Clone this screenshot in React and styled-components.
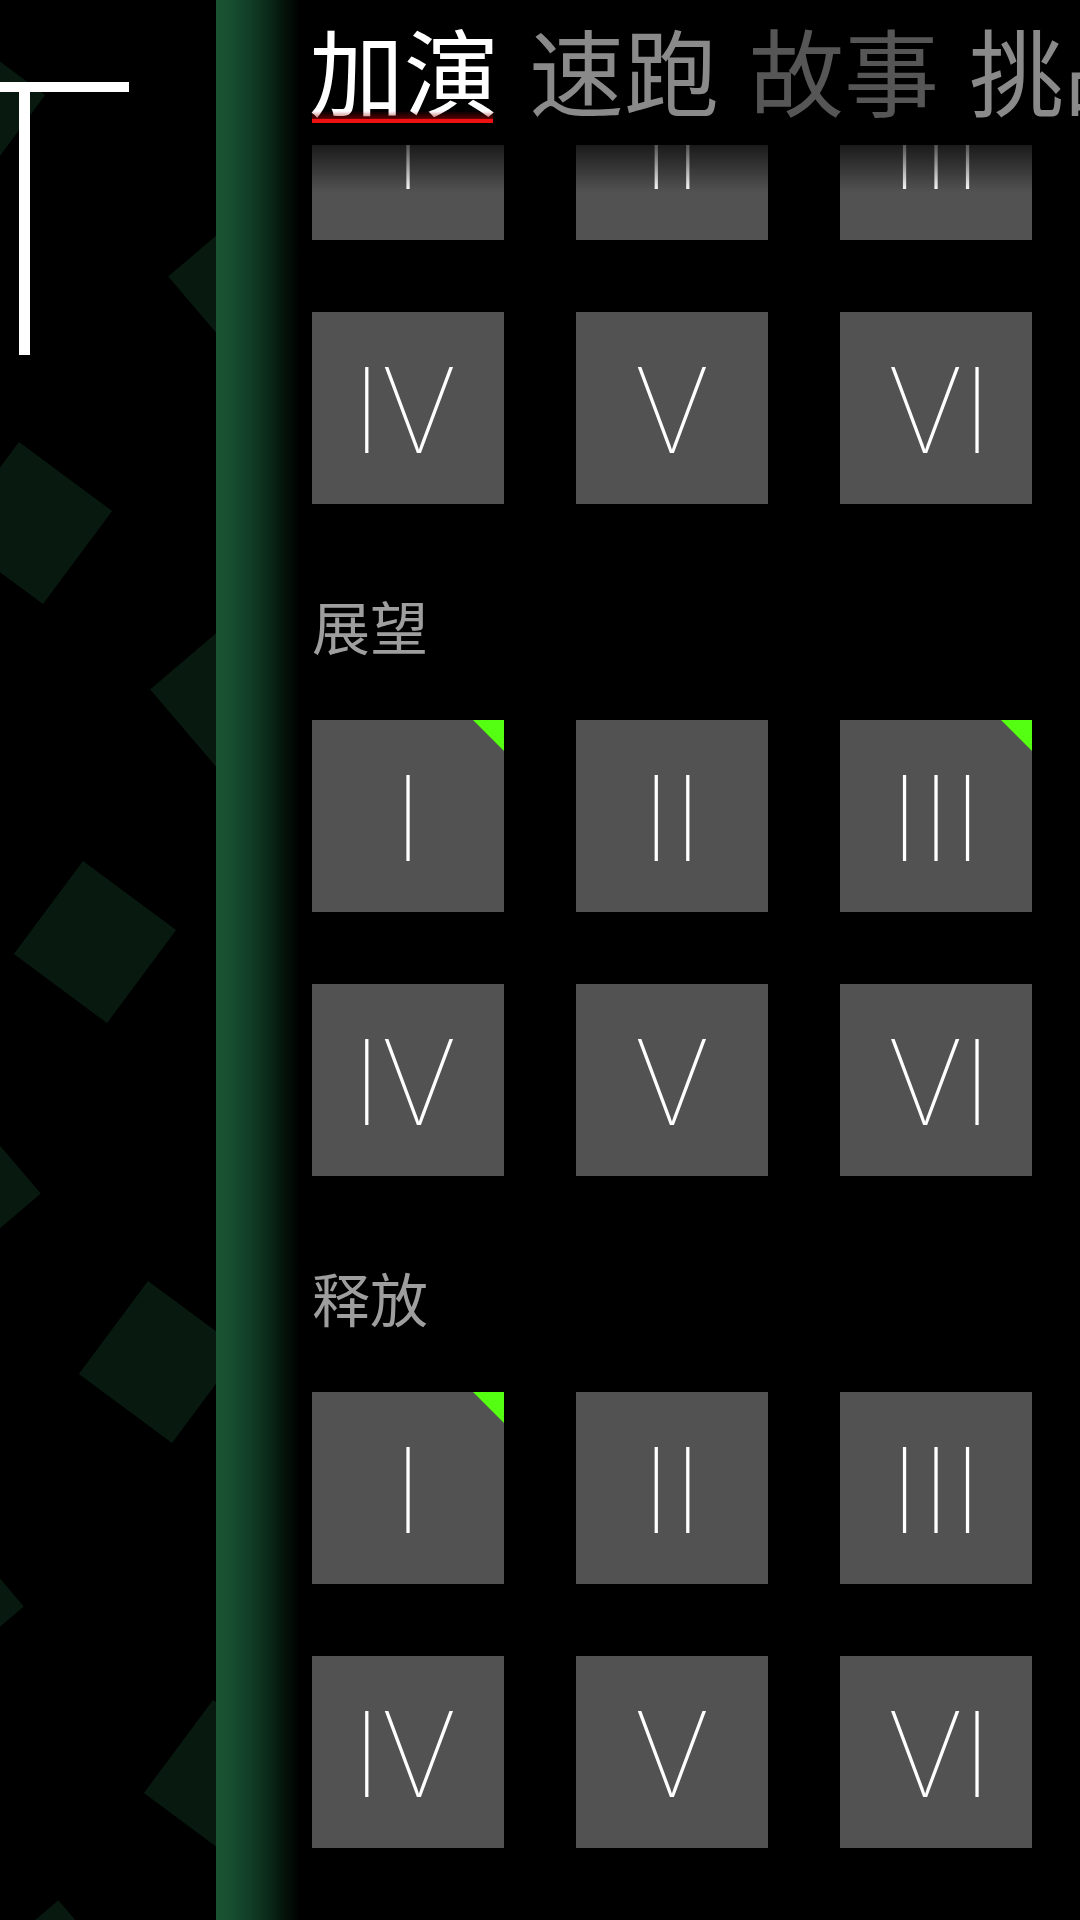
import React from "react";
import styled, { createGlobalStyle, css } from "styled-components";

const GlobalStyle = createGlobalStyle`
  html, body {
    margin: 0;
    padding: 0;
    background: #000;
  }
  body {
    width: 1080px;
    height: 1920px;
    overflow: hidden;
    font-family: "Noto Sans CJK SC", "Noto Sans", sans-serif;
  }
  * { box-sizing: border-box; }
`;

const Screen = styled.div`
  display: grid;
  grid-template-columns: 216px 1fr;
  width: 1080px;
  height: 1920px;
  overflow: hidden;
  background: #000;
`;

const SidePanel = styled.aside`
  position: relative;
  overflow: hidden;
  background: #000;
`;

const Pattern = styled.svg`
  position: absolute;
  inset: 0;
  display: block;
`;

const Bracket = styled.div`
  position: relative;
  z-index: 1;
  width: 129px;
  margin-top: 82px;
  border-top: 10px solid #fff;
`;

const Stem = styled.div`
  width: 11px;
  height: 263px;
  margin-left: 19px;
  background: #fff;
`;

const MainPanel = styled.main`
  display: flex;
  min-width: 0;
  background: #000;
`;

const Shade = styled.div`
  flex: none;
  width: 84px;
  background: linear-gradient(
    90deg,
    #185332 0px,
    #175031 12px,
    #123f27 32px,
    #0b2a19 52px,
    #041109 70px,
    #000 84px
  );
`;

const Content = styled.section`
  position: relative;
  flex: 1;
  min-width: 0;
  overflow: hidden;
  padding-left: 12px;
`;

const Header = styled.header`
  position: absolute;
  z-index: 2;
  top: 0;
  left: 0;
  right: 0;
  height: 192px;
  padding: 21px 0 0 9px;
  background: linear-gradient(
    180deg,
    #000 0px,
    #000 145px,
    rgba(0, 0, 0, 0.68) 145px,
    rgba(0, 0, 0, 0) 192px
  );
`;

const Tabs = styled.nav`
  display: flex;
  gap: 30px;
  white-space: nowrap;
`;

const Tab = styled.div`
  position: relative;
  flex: none;
  font-family: "Noto Sans CJK SC", "Noto Sans", sans-serif;
  font-size: 95px;
  line-height: 95px;
  color: ${(p) => p.$color};
  ${(p) =>
    p.$active &&
    css`
      &::after {
        content: "";
        position: absolute;
        left: 3px;
        right: 6px;
        bottom: -7px;
        height: 12px;
        background: linear-gradient(
          180deg,
          rgba(255, 0, 0, 0) 0%,
          rgba(150, 0, 0, 0.55) 62%,
          #ee1111 66%,
          #ee1111 100%
        );
      }
    `}
`;

const List = styled.div`
  display: flex;
  flex-direction: column;
  gap: 91px;
  margin-top: 48px;
`;

const Group = styled.div`
  display: flex;
  flex-direction: column;
`;

const GroupTitle = styled.h2`
  margin: 0 0 65px;
  font-family: "Noto Sans CJK SC", "Noto Sans", sans-serif;
  font-weight: 400;
  font-size: 58px;
  line-height: 60px;
  color: #9e9e9e;
`;

const Grid = styled.div`
  display: grid;
  grid-template-columns: repeat(3, 192px);
  gap: 72px;
`;

const Tile = styled.div`
  position: relative;
  display: flex;
  align-items: center;
  justify-content: center;
  width: 192px;
  height: 192px;
  padding-top: 9px;
  background: #525252;
  ${(p) =>
    p.$marked &&
    css`
      &::before {
        content: "";
        position: absolute;
        top: 0;
        right: 0;
        width: 31px;
        height: 31px;
        background: #55ff11;
        clip-path: polygon(0 0, 100% 0, 100% 100%);
      }
    `}
`;

const Numeral = styled.span`
  font-family: "Roboto", "Liberation Sans", sans-serif;
  font-weight: 100;
  font-size: 121px;
  line-height: 1;
  color: #fff;
  padding-left: ${(p) => p.$padL || 0}px;
  padding-right: ${(p) => p.$padR || 0}px;
`;

const DIAMONDS = [
  { cx: -36, cy: 107, a: -8.4 },
  { cx: 250, cy: 283, a: 4.45 },
  { cx: 31, cy: 523, a: -8.4 },
  { cx: 232, cy: 696, a: 4.45 },
  { cx: 95, cy: 942, a: -8.4 },
  { cx: -41, cy: 1187, a: 4.45 },
  { cx: 160, cy: 1362, a: -8.4 },
  { cx: -58, cy: 1600, a: 4.45 },
  { cx: 225, cy: 1781, a: -8.4 },
  { cx: 52, cy: 1982, a: 4.45 },
];

const diamondPoints = ({ cx, cy, a }) => {
  const r = 82;
  const pts = [];
  for (let k = 0; k < 4; k++) {
    const t = ((a + 90 * k) * Math.PI) / 180;
    pts.push(`${(cx + r * Math.cos(t)).toFixed(1)},${(cy + r * Math.sin(t)).toFixed(1)}`);
  }
  return pts.join(" ");
};

const TABS = [
  { label: "加演", color: "#ffffff", active: true },
  { label: "速跑", color: "#8a8a8a" },
  { label: "故事", color: "#565656" },
  { label: "挑战", color: "#8a8a8a" },
];

const NUMERALS = [
  { text: "I" },
  { text: "II" },
  { text: "III" },
  { text: "IV", padR: 10 },
  { text: "V" },
  { text: "VI", padL: 10 },
];

const GROUPS = [
  { title: null, marks: [] },
  { title: "展望", marks: [0, 2] },
  { title: "释放", marks: [0] },
];

export default function App() {
  return (
    <>
      <GlobalStyle />
      <Screen>
        <SidePanel>
          <Pattern width="216" height="1920" viewBox="0 0 216 1920">
            {DIAMONDS.map((d, i) => (
              <polygon key={i} points={diamondPoints(d)} fill="#081a10" />
            ))}
          </Pattern>
          <Bracket>
            <Stem />
          </Bracket>
        </SidePanel>
        <MainPanel>
          <Shade />
          <Content>
            <Header>
              <Tabs>
                {TABS.map((t) => (
                  <Tab key={t.label} $color={t.color} $active={t.active}>
                    {t.label}
                  </Tab>
                ))}
              </Tabs>
            </Header>
            <List>
              {GROUPS.map((g, gi) => (
                <Group key={gi}>
                  {g.title && <GroupTitle>{g.title}</GroupTitle>}
                  <Grid>
                    {NUMERALS.map((n, i) => (
                      <Tile key={n.text} $marked={g.marks.includes(i)}>
                        <Numeral $padL={n.padL} $padR={n.padR}>
                          {n.text}
                        </Numeral>
                      </Tile>
                    ))}
                  </Grid>
                </Group>
              ))}
            </List>
          </Content>
        </MainPanel>
      </Screen>
    </>
  );
}
